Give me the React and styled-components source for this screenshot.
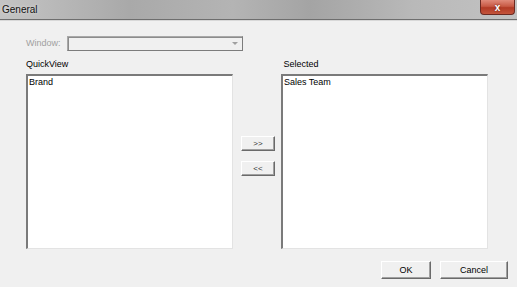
import React from "react";
import styled, { createGlobalStyle } from "styled-components";

const GlobalStyle = createGlobalStyle`
  html, body {
    margin: 0;
    padding: 0;
    background: #f0f0f0;
  }
  body {
    font-family: "Liberation Sans", Arial, sans-serif;
    font-size: 9px;
    color: #000;
  }
`;

const Dialog = styled.div`
  width: 517px;
  height: 287px;
  background: #f0f0f0;
  display: flex;
  flex-direction: column;
  overflow: hidden;
`;

const TitleBar = styled.div`
  height: 20px;
  box-sizing: border-box;
  display: flex;
  align-items: flex-start;
  justify-content: space-between;
  background: linear-gradient(
    90deg,
    #c4c4c4 0%,
    #a9a9a9 25%,
    #b4b4b4 45%,
    #a4a4a4 60%,
    #b9b9b9 80%,
    #c2c2c2 100%
  );
  border-bottom: 1px solid #6e6e6e;
  box-shadow: 0 1px 0 #d8d8d8;
`;

const Title = styled.span`
  font-size: 10px;
  color: #111;
  padding: 4px 0 0 2px;
  text-shadow: 0 0 3px #e6e6e6;
`;

const CloseButton = styled.div`
  width: 35px;
  height: 15px;
  margin-right: 2px;
  box-sizing: border-box;
  border: 1px solid #6b2a22;
  border-top: none;
  border-radius: 0 0 4px 4px;
  background: linear-gradient(180deg, #e08a7a 0%, #c85a45 45%, #b23a25 55%, #c4553c 100%);
  display: flex;
  align-items: center;
  justify-content: center;
  color: #fff;
  font-size: 10px;
  font-weight: bold;
  text-shadow: 0 0 2px #5a1a10;
`;

const Body = styled.div`
  flex: 1;
  padding: 16px 9px 0 26px;
  display: flex;
  flex-direction: column;
`;

const WindowRow = styled.div`
  display: flex;
  align-items: center;
  gap: 6px;
  height: 15px;
`;

const Label = styled.span`
  color: ${(p) => (p.disabled ? "#a0a0a0" : "#000")};
  line-height: 11px;
`;

const Combo = styled.div`
  width: 176px;
  height: 15px;
  box-sizing: border-box;
  border: 1px solid #a8a8a8;
  border-right-color: #7c7c7c;
  border-bottom-color: #7c7c7c;
  box-shadow: inset 1px 1px 0 #8c8c8c;
  background: #f0f0f0;
  display: flex;
  justify-content: flex-end;
  align-items: center;
  padding-right: 4px;
`;

const Arrow = styled.div`
  width: 0;
  height: 0;
  border-left: 3px solid transparent;
  border-right: 3px solid transparent;
  border-top: 3px solid #a0a0a0;
`;

const Lists = styled.div`
  display: grid;
  grid-template-columns: 207px 48px 207px;
  margin-top: 8px;
`;

const Column = styled.div`
  display: flex;
  flex-direction: column;
  gap: 4px;
`;

const ListBox = styled.div`
  height: 175px;
  box-sizing: border-box;
  background: #fff;
  border: 1px solid #e3e3e3;
  border-top: 2px solid #7a7a7a;
  border-left: 2px solid #7a7a7a;
  padding: 1px 1px;
  line-height: 11px;
`;

const Movers = styled.div`
  display: flex;
  flex-direction: column;
  align-items: flex-start;
  gap: 10px;
  padding: 77px 0 0 8px;
`;

const Button = styled.div`
  width: ${(p) => p.w}px;
  height: ${(p) => p.h}px;
  box-sizing: border-box;
  background: #f0f0f0;
  border: 1px solid #fff;
  border-right-color: #6a6a6a;
  border-bottom-color: #6a6a6a;
  box-shadow: inset -1px -1px 0 #a0a0a0;
  display: flex;
  align-items: center;
  justify-content: center;
  font-size: ${(p) => p.fs || 9}px;
  color: ${(p) => p.color || "#000"};
`;

const Footer = styled.div`
  display: flex;
  justify-content: flex-end;
  gap: 9px;
  margin-top: 12px;
`;

export default function App() {
  return (
    <>
      <GlobalStyle />
      <Dialog>
        <TitleBar>
          <Title>General</Title>
          <CloseButton>x</CloseButton>
        </TitleBar>
        <Body>
          <WindowRow>
            <Label disabled>Window:</Label>
            <Combo>
              <Arrow />
            </Combo>
          </WindowRow>
          <Lists>
            <Column>
              <Label>QuickView</Label>
              <ListBox>Brand</ListBox>
            </Column>
            <Movers>
              <Button w={34} h={15} fs={8} color="#333">&gt;&gt;</Button>
              <Button w={34} h={15} fs={8} color="#333">&lt;&lt;</Button>
            </Movers>
            <Column>
              <Label>&nbsp;Selected</Label>
              <ListBox>Sales Team</ListBox>
            </Column>
          </Lists>
          <Footer>
            <Button w={50} h={18}>OK</Button>
            <Button w={68} h={18}>Cancel</Button>
          </Footer>
        </Body>
      </Dialog>
    </>
  );
}
